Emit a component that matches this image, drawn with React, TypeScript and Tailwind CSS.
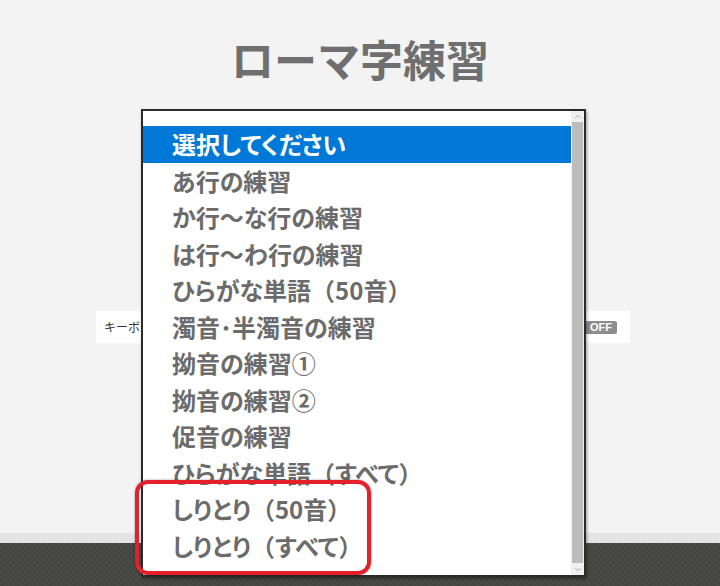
import React from 'react'

const JP = "font-['Noto_Sans_CJK_JP','Noto_Sans',sans-serif]"

const options = [
  '選択してください',
  'あ行の練習',
  'か行〜な行の練習',
  'は行〜わ行の練習',
  'ひらがな単語（50音）',
  '濁音･半濁音の練習',
  '拗音の練習①',
  '拗音の練習②',
  '促音の練習',
  'ひらがな単語（すべて）',
  'しりとり（50音）',
  'しりとり（すべて）',
]

// full-width brackets keep their width, kana get proportional spacing
function Label({ text }: { text: string }) {
  const parts = text.split(/([（）])/)
  return (
    <>
      {parts.map((p, i) =>
        p === '（' || p === '）' ? (
          <span key={i} className="[font-feature-settings:normal]">
            {p}
          </span>
        ) : (
          <React.Fragment key={i}>{p}</React.Fragment>
        )
      )}
    </>
  )
}

function Chevron({ up }: { up?: boolean }) {
  return (
    <svg width="8" height="5" viewBox="0 0 8 5" className="text-[#a8a8a8]">
      <path
        d={up ? 'M1 4.2 L4 1.2 L7 4.2' : 'M1 0.8 L4 3.8 L7 0.8'}
        fill="none"
        stroke="currentColor"
        strokeWidth="1"
      />
    </svg>
  )
}

export default function App() {
  return (
    <div className={`relative h-[586px] w-[720px] overflow-hidden bg-[#f3f3f3] flex flex-col ${JP}`}>
      {/* Header */}
      <h1 className="pt-[30px] text-center text-[43px] leading-[57px] font-bold text-[#6f6f6f]">
        ローマ字練習
      </h1>

      {/* Settings row (behind the open list) */}
      <div className="mt-[224px] ml-[96px] w-[534px] h-[32px] bg-white flex items-center justify-between pl-[8px] pr-[13px]">
        <span className="text-[12px] text-[#333]">キーボード表示</span>
        <span className="h-[13px] w-[32px] rounded-[2px] bg-[#8c8c8c] text-white text-[11px] leading-[13px] font-bold text-center font-['Liberation_Sans',sans-serif]">
          OFF
        </span>
      </div>

      <div className="flex-1" />

      {/* Footer */}
      <div className="h-[10px] bg-[#e4e4e4]" />
      <div className="h-[43px] bg-[#474744] bg-[image:repeating-conic-gradient(#4b4b48_0_25%,#434340_0_50%)] bg-[length:6px_6px]" />

      {/* Open listbox */}
      <div className="absolute left-[141px] top-[109px] w-[445px] h-[468px] border-2 border-[#2a2a2a] bg-white shadow-[1px_2px_3px_rgba(0,0,0,0.35)] flex">
        <ul className="flex-1 pt-[15px] [font-feature-settings:'palt']">
          {options.map((o, i) => (
            <li
              key={o}
              className={`h-[36.5px] pl-[29px] text-[24px] leading-[36.5px] font-bold whitespace-nowrap ${
                i === 0 ? 'bg-[#0078d7] text-white' : 'text-[#6b6b6b]'
              }`}
            >
              <Label text={o} />
            </li>
          ))}
        </ul>
        <div className="w-[13px] bg-[#f0f0f0] flex flex-col items-center">
          <div className="h-[11px] flex items-center justify-center">
            <Chevron up />
          </div>
          <div className="flex-1 w-[11px] bg-[#bcbcbc]" />
          <div className="h-[12px] flex items-center justify-center">
            <Chevron />
          </div>
        </div>
      </div>

      {/* Annotation */}
      <div className="absolute left-[135px] top-[480px] w-[236px] h-[95px] rounded-[13px] border-[4px] border-[#e3202c] shadow-[0_0_2px_rgba(0,0,0,0.5)]" />
    </div>
  )
}
